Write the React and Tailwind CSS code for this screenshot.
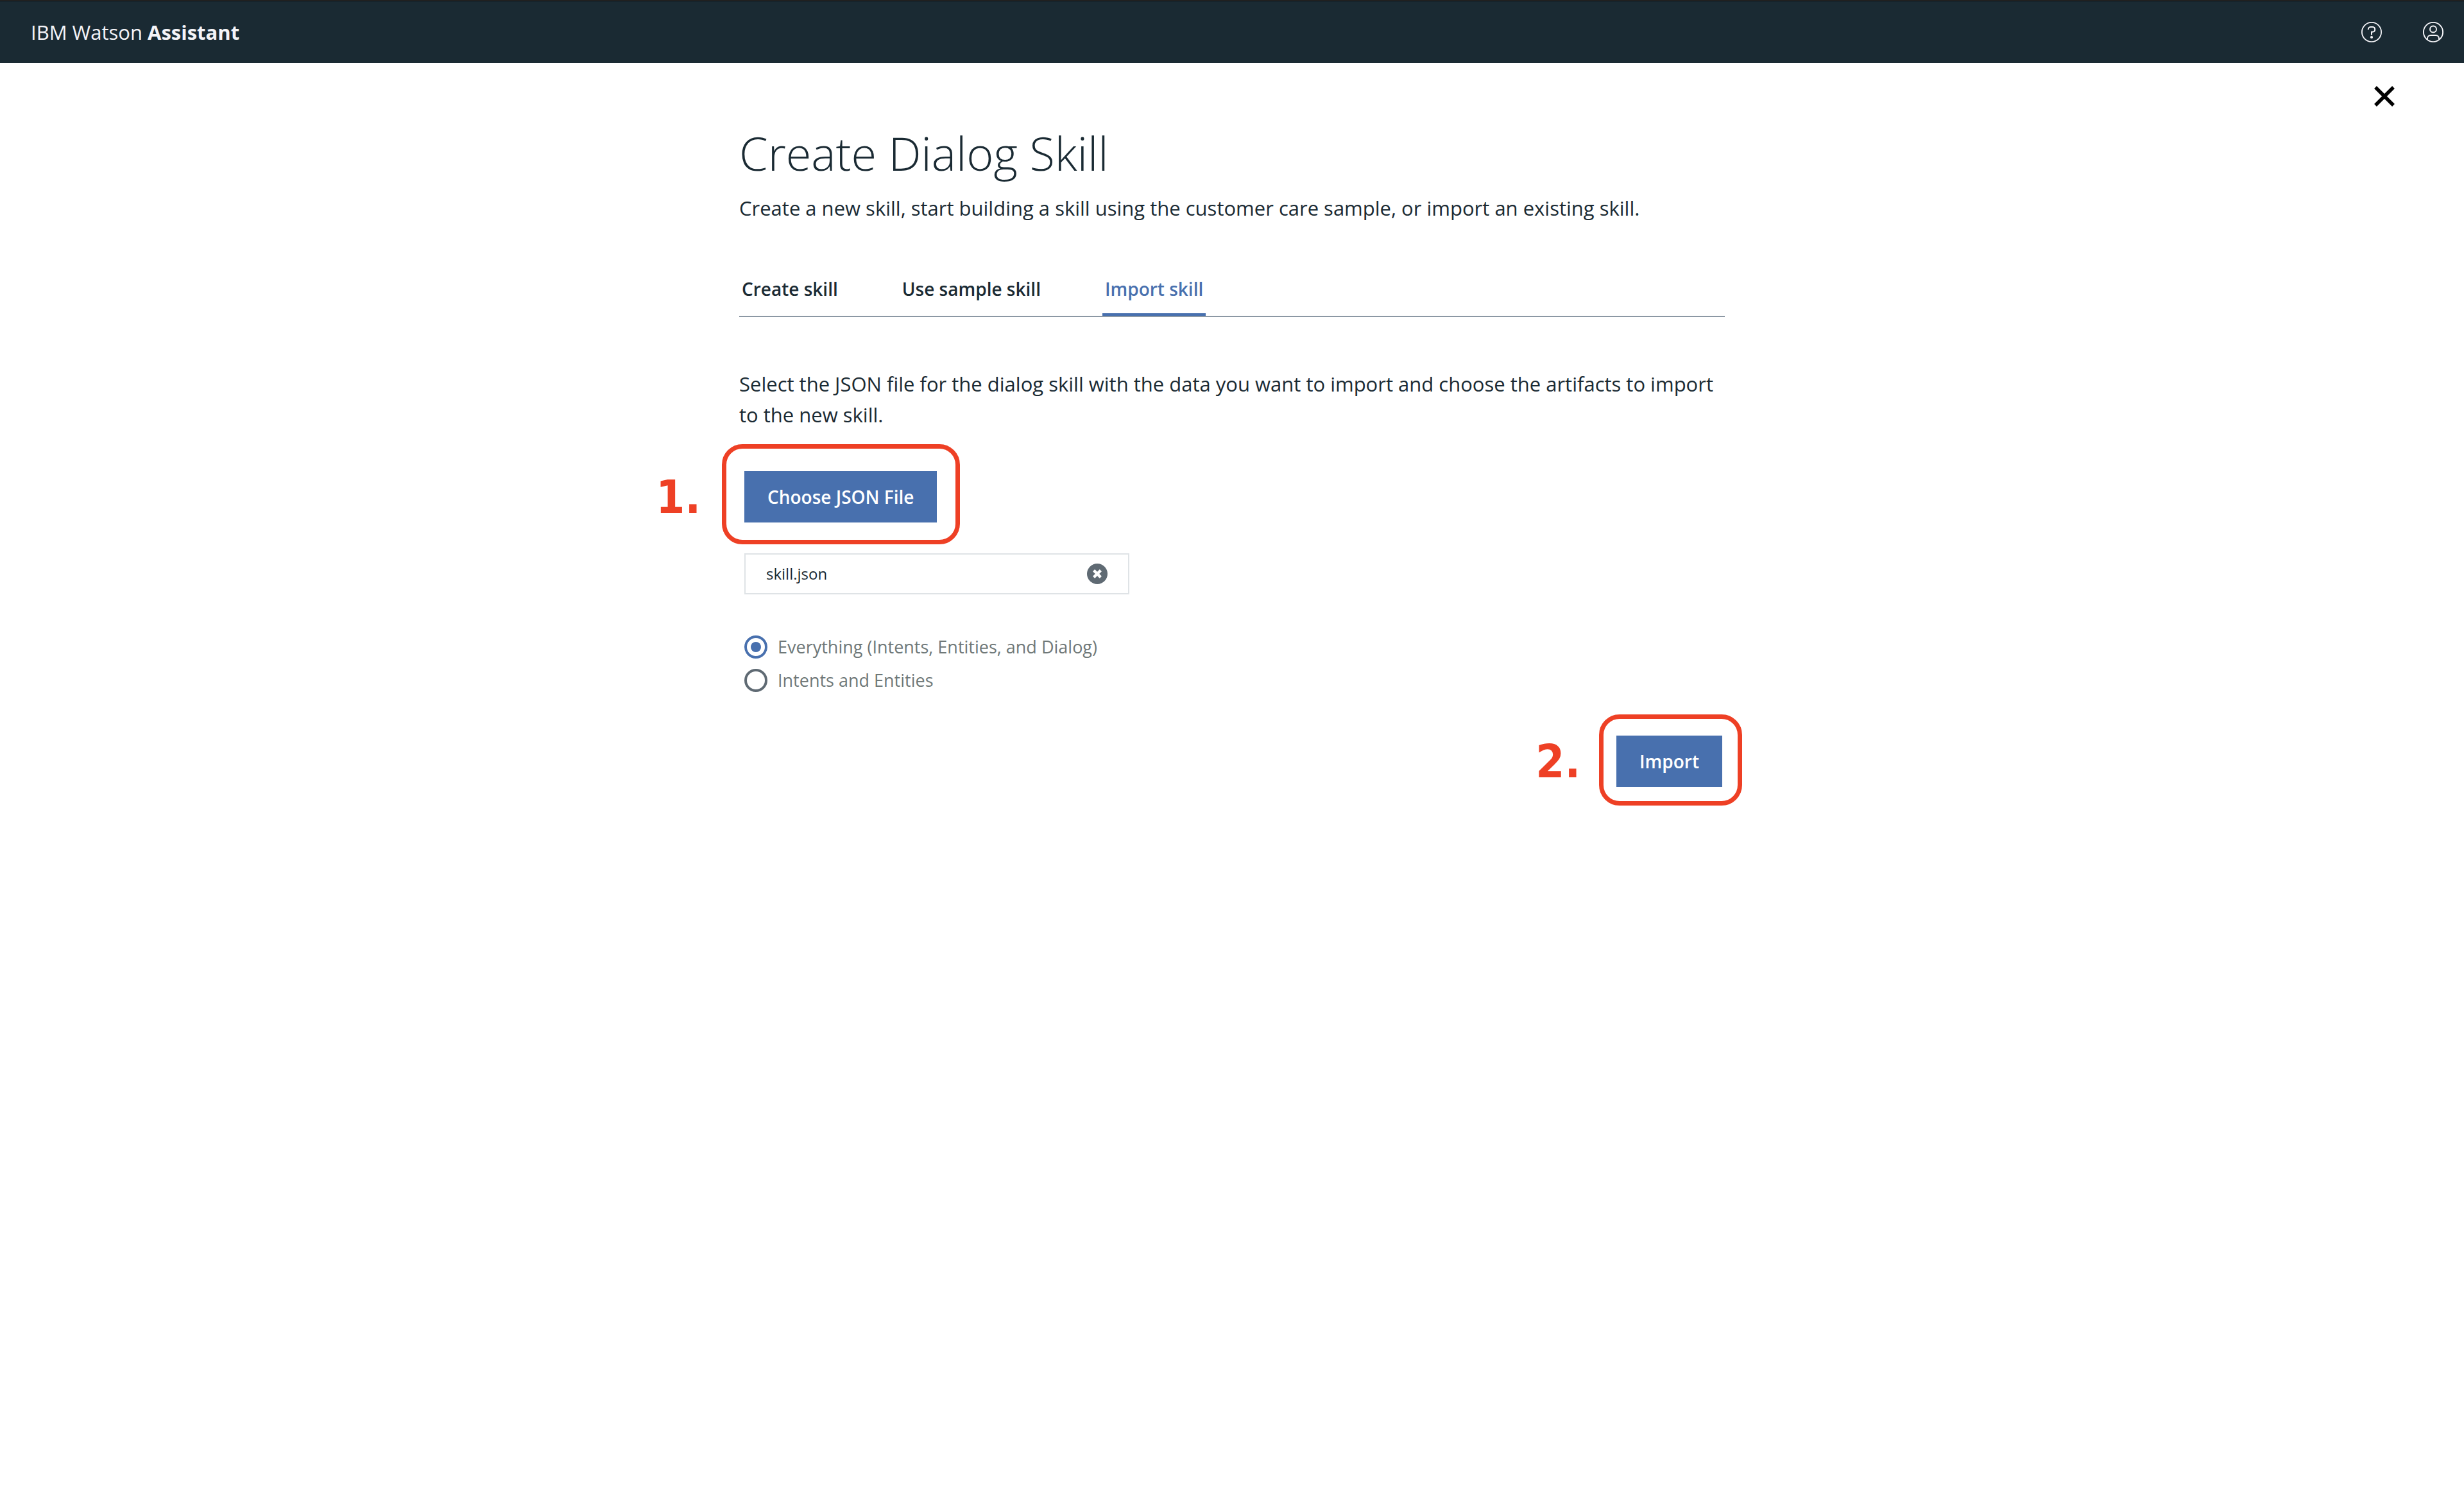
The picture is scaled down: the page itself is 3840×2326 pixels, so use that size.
import React, { useState } from "react";

const TABS = ["Create skill", "Use sample skill", "Import skill"];
const SCOPES = [
  { id: "everything", label: "Everything (Intents, Entities, and Dialog)" },
  { id: "intents", label: "Intents and Entities" },
];

function HelpIcon() {
  return (
    <svg viewBox="0 0 32 32" className="size-8" fill="none" stroke="currentColor" aria-hidden="true">
      <circle cx="16" cy="16" r="15.1" strokeWidth="1.8" />
      <path d="M10.8 12.2V11.6C10.8 9.4 12.6 7.9 14.8 7.9h2.4c2.3 0 4 1.6 4 3.9s-1.7 3.9-4 3.9H16v4.7" strokeWidth="2" />
      <circle cx="16" cy="24" r="2.1" fill="currentColor" stroke="none" />
    </svg>
  );
}

function UserIcon() {
  return (
    <svg viewBox="0 0 32 32" className="size-8" fill="none" stroke="currentColor" strokeWidth="1.9" aria-hidden="true">
      <circle cx="16" cy="16" r="15.1" />
      <circle cx="16" cy="11.5" r="5" />
      <path d="M7 27.8V26a5 5 0 0 1 5-5h8a5 5 0 0 1 5 5v1.8" />
    </svg>
  );
}

function CloseIcon() {
  return (
    <svg viewBox="0 0 32 32" className="size-8" stroke="currentColor" strokeWidth="5.4" aria-hidden="true">
      <path d="M2 2 30 30M30 2 2 30" />
    </svg>
  );
}

function ClearIcon() {
  return (
    <svg viewBox="0 0 32 32" className="size-8" aria-hidden="true">
      <circle cx="16" cy="16" r="16" fill="#5f6a73" />
      <path d="M10.6 10.6 21.4 21.4M21.4 10.6 10.6 21.4" stroke="#fff" strokeWidth="4.4" />
    </svg>
  );
}

function PrimaryButton({ children }) {
  return (
    <button type="button" className="h-20 bg-[#4870ae] px-9 text-[28px] font-semibold text-white">
      {children}
    </button>
  );
}

function StepNumber({ className, children }) {
  return (
    <span
      className={
        "pointer-events-none absolute top-1/2 right-full -translate-y-1/2 font-['DejaVu_Sans_Condensed','DejaVu_Sans',sans-serif] text-[72px] leading-[80px] font-bold text-[#ee4025] " +
        className
      }
    >
      {children}
    </span>
  );
}

export default function App() {
  const [tab, setTab] = useState("Import skill");
  const [scope, setScope] = useState("everything");

  return (
    <div className="min-h-screen bg-white font-['Open_Sans','Noto_Sans',sans-serif] text-[31px] leading-[48px] text-[#1a2a33]">
      <div className="h-px bg-[#2d2d2d]" />
      <div className="h-px bg-black" />
      <header className="flex h-24 items-center justify-between bg-[#1a2a33] pr-8 pl-12 text-[#f4f4f8]">
        <div>
          IBM Watson <b className="font-bold">Assistant</b>
        </div>
        <div className="flex gap-16">
          <button type="button" aria-label="Help"><HelpIcon /></button>
          <button type="button" aria-label="Account"><UserIcon /></button>
        </div>
      </header>

      <div className="relative">
        <button type="button" aria-label="Close" className="absolute top-9 right-[108px] text-black">
          <CloseIcon />
        </button>

        <main className="mx-auto w-2/5 pt-[100px]">
          <h1 className="text-[72px] leading-[80px] font-light">Create Dialog Skill</h1>
          <p className="mt-[22px] whitespace-nowrap">
            Create a new skill, start building a skill using the customer care sample, or import an existing skill.
          </p>

          <div role="tablist" className="mt-[82px] flex gap-[92px] border-b-2 border-[#8c98a4]">
            {TABS.map((name) => (
              <button
                key={name}
                type="button"
                role="tab"
                aria-selected={tab === name}
                onClick={() => setTab(name)}
                className={
                  "border-b-4 px-1 pb-[18px] text-[28px] leading-10 font-semibold " +
                  (tab === name ? "border-[#4870ae] text-[#4870ae]" : "border-transparent")
                }
              >
                {name}
              </button>
            ))}
          </div>

          <p className="mt-20">
            Select the JSON file for the dialog skill with the data you want to import and choose the artifacts to
            import to the new skill.
          </p>

          <div className="mt-16 ml-2 flex">
            <div className="relative flex">
              <PrimaryButton>Choose JSON File</PrimaryButton>
              <div className="pointer-events-none absolute -top-[42px] -right-9 -bottom-[34px] -left-[35px] rounded-[32px] border-[7px] border-[#ee4025]" />
              <StepNumber className="mr-[68px]">1.</StepNumber>
            </div>
          </div>

          <div className="mt-12 ml-2 flex h-16 w-[600px] items-center justify-between border-2 border-[#dfe3e6] px-8 text-[24px]">
            <span>skill.json</span>
            <button type="button" aria-label="Remove file"><ClearIcon /></button>
          </div>

          <div role="radiogroup" aria-label="Artifacts to import" className="mt-16 ml-2 flex flex-col gap-4 text-[27px] leading-9 text-[#6f7878]">
            {SCOPES.map((s) => (
              <div key={s.id} className="flex items-center gap-4">
                <input
                  id={s.id}
                  type="radio"
                  name="scope"
                  checked={scope === s.id}
                  onChange={() => setScope(s.id)}
                  className="grid size-9 appearance-none place-content-center rounded-full border-4 border-[#5f6a73] checked:border-[#4870ae] checked:before:size-4 checked:before:rounded-full checked:before:bg-[#4870ae] checked:before:content-['']"
                />
                <label htmlFor={s.id}>{s.label}</label>
              </div>
            ))}
          </div>

          <div className="mt-[68px] mr-1 flex justify-end">
            <div className="relative flex">
              <PrimaryButton>Import</PrimaryButton>
              <div className="pointer-events-none absolute -top-[33px] -right-[31px] -bottom-[29px] -left-[27px] rounded-[32px] border-[7px] border-[#ee4025]" />
              <StepNumber className="mr-14">2.</StepNumber>
            </div>
          </div>
        </main>
      </div>
    </div>
  );
}
